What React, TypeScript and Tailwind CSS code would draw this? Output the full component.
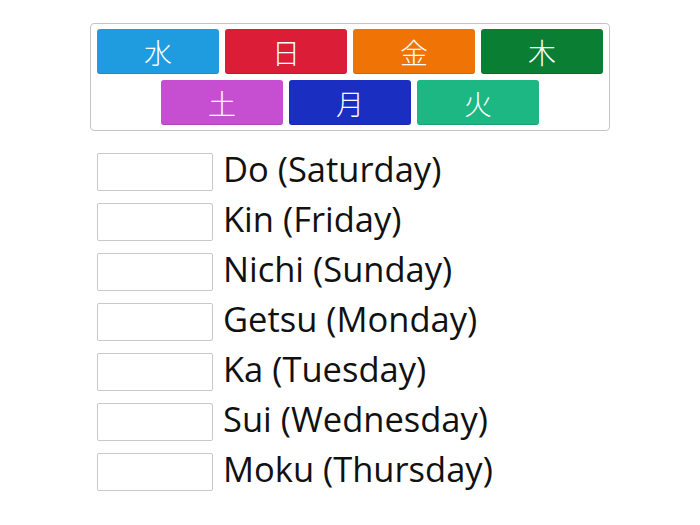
import React from "react";

const tiles1 = [
  { c: "水", bg: "bg-[#1f9ce0]" },
  { c: "日", bg: "bg-[#db1d38]" },
  { c: "金", bg: "bg-[#f07306]" },
  { c: "木", bg: "bg-[#0a7f34]" },
];
const tiles2 = [
  { c: "土", bg: "bg-[#c64fd1]" },
  { c: "月", bg: "bg-[#1a2ec2]" },
  { c: "火", bg: "bg-[#1cb783]" },
];
const rows = [
  "Do (Saturday)",
  "Kin (Friday)",
  "Nichi (Sunday)",
  "Getsu (Monday)",
  "Ka (Tuesday)",
  "Sui (Wednesday)",
  "Moku (Thursday)",
];

function Tile({ c, bg }: { c: string; bg: string }) {
  return (
    <div
      className={`${bg} w-[122px] h-[45px] rounded-[3px] flex items-center justify-center text-white text-[28px] font-light shadow-[inset_0_-1px_0_rgba(0,0,0,0.12)]`}
      style={{ fontFamily: '"Noto Sans CJK JP", sans-serif' }}
    >
      {c}
    </div>
  );
}

export default function App() {
  return (
    <div className="w-[700px] h-[525px] bg-white flex flex-col items-center pt-[23px]">
      <div className="w-[520px] h-[108px] border border-[#c4c4c4] rounded-[4px] flex flex-col items-center pt-[5px] gap-[6px]">
        <div className="flex gap-[6px]">
          {tiles1.map((t) => (
            <Tile key={t.c} {...t} />
          ))}
        </div>
        <div className="flex gap-[6px]">
          {tiles2.map((t) => (
            <Tile key={t.c} {...t} />
          ))}
        </div>
      </div>
      <div className="w-[520px] pl-[7px] mt-[22px] flex flex-col gap-[12px]">
        {rows.map((r) => (
          <div key={r} className="flex items-center h-[38px]">
            <div className="w-[116px] h-[38px] border border-[#c8c8c8] rounded-[2px] bg-white shrink-0" />
            <div
              className="ml-[10px] text-[34.5px] text-[#111] leading-none whitespace-nowrap -mt-[5px]"
              style={{ fontFamily: '"Open Sans", sans-serif' }}
            >
              {r}
            </div>
          </div>
        ))}
      </div>
    </div>
  );
}
